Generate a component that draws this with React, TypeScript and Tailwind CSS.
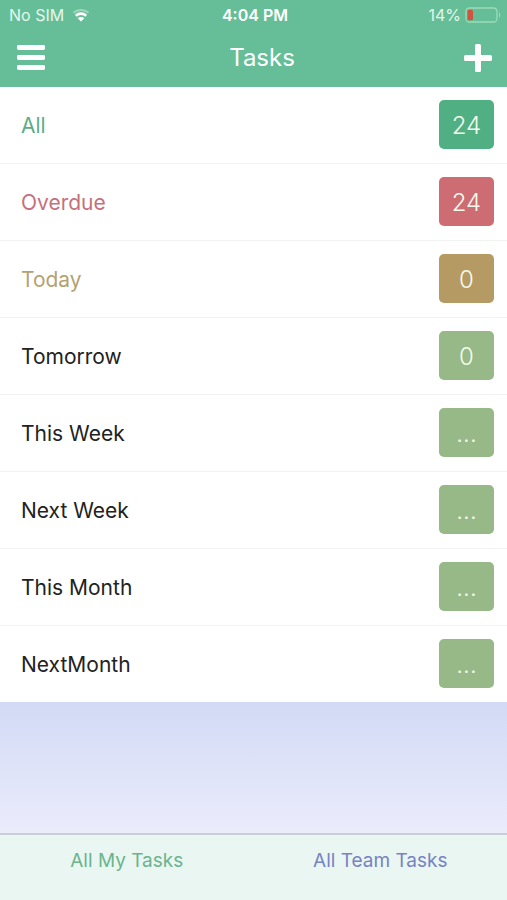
import clsx from 'clsx';

/* ── Task groups ─────────────────────────────── */
const taskGroups = [
    { id: 'all', label: 'All', count: '24', text: 'text-[#5aad8a]', badge: 'bg-[#50b083]' },
    { id: 'overdue', label: 'Overdue', count: '24', text: 'text-[#c5707c]', badge: 'bg-[#cd6c72]' },
    { id: 'today', label: 'Today', count: '0', text: 'text-[#b4a272]', badge: 'bg-[#b69a63]' },
    { id: 'tomorrow', label: 'Tomorrow', count: '0', text: 'text-[#222222]', badge: 'bg-[#96b987]' },
    { id: 'this-week', label: 'This Week', count: '...', text: 'text-[#222222]', badge: 'bg-[#96b987]' },
    { id: 'next-week', label: 'Next Week', count: '...', text: 'text-[#222222]', badge: 'bg-[#96b987]' },
    { id: 'this-month', label: 'This Month', count: '...', text: 'text-[#222222]', badge: 'bg-[#96b987]' },
    { id: 'next-month', label: 'NextMonth', count: '...', text: 'text-[#222222]', badge: 'bg-[#96b987]' },
];

function WifiIcon() {
    return (
        <svg viewBox="0 0 18 14" className="h-[14px] w-[18px]" fill="none" aria-hidden="true">
            <path d="M1.5 4.8C5.8.9 12.2.9 16.5 4.8" stroke="#9ad8b8" strokeWidth="2" />
            <path d="M3.8 7.7c3-2.8 7.4-2.8 10.4 0" stroke="#fff" strokeWidth="2.6" />
            <path d="M9 13.4 5.6 10.2c2-1.7 4.8-1.7 6.8 0z" fill="#fff" />
        </svg>
    );
}

function BatteryIcon() {
    return (
        <svg viewBox="0 0 36 16" className="h-4 w-9" fill="none" aria-hidden="true">
            <rect x="1" y="1" width="31" height="14" rx="3.5" stroke="#9bdcb9" strokeWidth="1.3" />
            <path d="M34 5.5c1.6.6 1.6 4.4 0 5z" fill="#9bdcb9" />
            <rect x="2.5" y="2.7" width="5.5" height="10.6" rx="1.5" fill="#cf5440" />
        </svg>
    );
}

export default function App() {
    return (
        <div className="flex min-h-screen flex-col bg-white font-['Inter','Liberation_Sans',sans-serif]">
            <header className="bg-[#65be97] pb-[9px] text-white">
                {/* ── Status bar ────────────────────── */}
                <div className="grid h-[30px] grid-cols-3 items-center pr-[6px] pl-[9px] text-[16px] leading-5">
                    <div className="flex items-center gap-2 text-[#e4f6ec]">
                        <span>No SIM</span>
                        <WifiIcon />
                    </div>
                    <span className="text-center font-semibold">4:04 PM</span>
                    <div className="flex items-center justify-end gap-1 text-[#e4f6ec]">
                        <span>14%</span>
                        <BatteryIcon />
                    </div>
                </div>

                {/* ── Title bar ─────────────────────── */}
                <div className="flex h-12 items-center justify-between pt-2 pr-[13px] pl-[14px]">
                    <button type="button" aria-label="Menu" className="w-12">
                        <svg viewBox="0 0 32 32" className="h-8 w-8" fill="#fff" aria-hidden="true">
                            <rect x="3" y="3" width="28" height="5" rx="1.4" />
                            <rect x="3" y="13" width="28" height="5" rx="1.4" />
                            <rect x="3" y="23" width="28" height="5" rx="1.4" />
                        </svg>
                    </button>
                    <h1 className="text-center text-[24px] leading-8">Tasks</h1>
                    <button type="button" aria-label="Add task" className="w-8">
                        <svg viewBox="0 0 32 32" className="h-8 w-8" fill="#fff" aria-hidden="true">
                            <rect x="2" y="13" width="28" height="6" rx="1.6" />
                            <rect x="13" y="2" width="6" height="28" rx="1.6" />
                        </svg>
                    </button>
                </div>
            </header>

            {/* ── Task groups ───────────────────────── */}
            <ul className="divide-y divide-[#f1f3f3] bg-white">
                {taskGroups.map((group) => (
                    <li key={group.id}>
                        <button
                            type="button"
                            className="flex h-[76px] w-full items-center justify-between pr-[13px] pb-px pl-[21px] text-left"
                        >
                            <span className={clsx('pt-[3px] text-[21px] leading-7', group.text)}>{group.label}</span>
                            <span
                                className={clsx(
                                    'flex h-[49px] w-[55px] items-center justify-center rounded-[5px] pt-[3px] text-[24px] font-light leading-8 text-[#f3fbee]',
                                    group.badge,
                                )}
                            >
                                {group.count}
                            </span>
                        </button>
                    </li>
                ))}
            </ul>

            <div className="flex-1 bg-linear-to-b from-[#d2daf5] to-[#ebecfc]" />

            {/* ── Bottom tabs ───────────────────────── */}
            <nav className="grid h-[67px] grid-cols-2 items-start border-t-2 border-[#c8ced8] bg-[#e9f6f1] pt-3 text-[19px] leading-7">
                <button type="button" className="text-[#6ab48f]">All My Tasks</button>
                <button type="button" className="text-[#7783c4]">All Team Tasks</button>
            </nav>
        </div>
    );
}
